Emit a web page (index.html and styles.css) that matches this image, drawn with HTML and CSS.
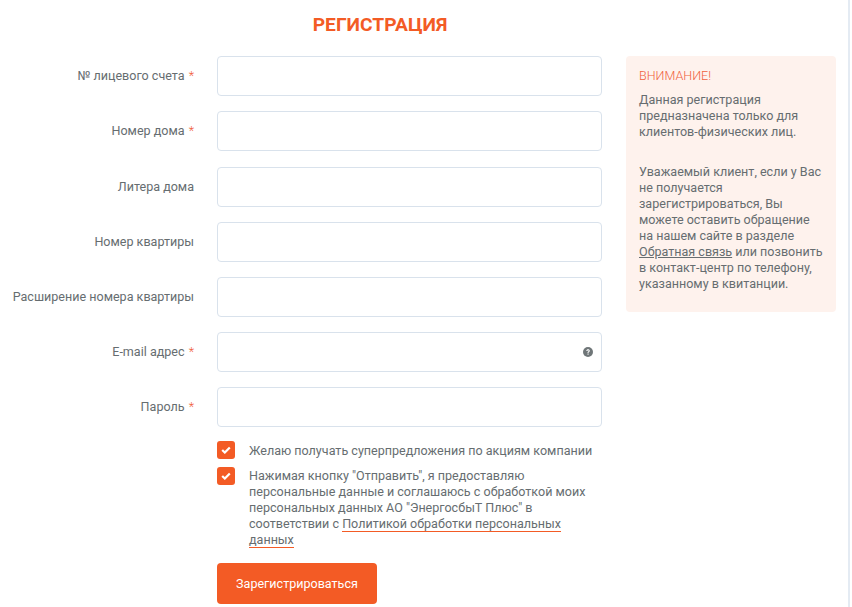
FILE: index.html
```html
<!DOCTYPE html>
<html lang="ru">
<head>
    <meta charset="UTF-8">
    <title>Регистрация</title>
    <link rel="stylesheet" href="styles.css">
</head>
<body>
    <div class="page">
        <h1 class="title">Регистрация</h1>
        <div class="content">
            <form class="form">
                <div class="row">
                    <label class="label">№ лицевого счета <span class="req">*</span></label>
                    <div class="field"><input class="input" type="text"></div>
                </div>
                <div class="row">
                    <label class="label">Номер дома <span class="req">*</span></label>
                    <div class="field"><input class="input" type="text"></div>
                </div>
                <div class="row">
                    <label class="label">Литера дома</label>
                    <div class="field"><input class="input" type="text"></div>
                </div>
                <div class="row">
                    <label class="label">Номер квартиры</label>
                    <div class="field"><input class="input" type="text"></div>
                </div>
                <div class="row">
                    <label class="label">Расширение номера квартиры</label>
                    <div class="field"><input class="input" type="text"></div>
                </div>
                <div class="row">
                    <label class="label">E-mail адрес <span class="req">*</span></label>
                    <div class="field">
                        <input class="input" type="text">
                        <svg class="help" viewBox="0 0 10 10" width="10" height="10">
                            <circle cx="5" cy="5" r="5" fill="#6f7678"/>
                            <path d="M3.3 3.9c0-1 .8-1.6 1.8-1.6s1.7.6 1.7 1.5c0 1.2-1.3 1.2-1.3 2.1H4.5c0-1.4 1.2-1.4 1.2-2.1 0-.3-.3-.5-.6-.5-.4 0-.7.3-.7.7z" fill="#fff"/>
                            <rect x="4.5" y="6.5" width="1.1" height="1.2" fill="#fff"/>
                        </svg>
                    </div>
                </div>
                <div class="row">
                    <label class="label">Пароль <span class="req">*</span></label>
                    <div class="field"><input class="input" type="text"></div>
                </div>
                <div class="checks">
                    <div class="check">
                        <span class="box">
                            <svg viewBox="0 0 10 8" width="10" height="8"><path d="M1.2 4l2.6 2.5L8.8 1.4" fill="none" stroke="#fff" stroke-width="2.2"/></svg>
                        </span>
                        <p class="check-text check-single">Желаю получать суперпредложения по акциям компании</p>
                    </div>
                    <div class="check">
                        <span class="box">
                            <svg viewBox="0 0 10 8" width="10" height="8"><path d="M1.2 4l2.6 2.5L8.8 1.4" fill="none" stroke="#fff" stroke-width="2.2"/></svg>
                        </span>
                        <p class="check-text">Нажимая кнопку "Отправить", я предоставляю персональные данные и соглашаюсь с обработкой моих персональных данных АО "ЭнергосбыТ Плюс" в соответствии с <a class="policy" href="#">Политикой обработки персональных данных</a></p>
                    </div>
                </div>
                <button class="submit" type="button">Зарегистрироваться</button>
            </form>
            <aside class="notice">
                <p class="notice-title">ВНИМАНИЕ!</p>
                <p class="notice-text">Данная регистрация предназначена только для клиентов-физических лиц.</p>
                <p class="notice-text">Уважаемый клиент, если у Вас не получается зарегистрироваться, Вы можете оставить обращение на нашем сайте в разделе <a class="link" href="#">Обратная связь</a> или позвонить в контакт-центр по телефону, указанному в квитанции.</p>
            </aside>
        </div>
    </div>
</body>
</html>
```
FILE: styles.css
```css
* {
    margin: 0;
    padding: 0;
    box-sizing: border-box;
}
html, body {
    height: 607px;
    overflow: hidden;
}
body {
    background: #fff;
    font-family: Roboto, "Liberation Sans", sans-serif;
    font-size: 12.55px;
    line-height: 16px;
    color: #666d70;
}
.page {
    width: 850px;
    height: 607px;
    border-right: 2px solid #e4ebf3;
    padding-right: 12px;
}
.title {
    width: 760px;
    padding-top: 13px;
    height: 56.2px;
    text-align: center;
    font-size: 19.2px;
    line-height: 24px;
    font-weight: 700;
    text-transform: uppercase;
    color: #f35b25;
}
.content {
    display: flex;
    gap: 24px;
    align-items: flex-start;
}
.form {
    width: 602px;
    flex-shrink: 0;
}
.row {
    display: flex;
    align-items: center;
    gap: 23px;
    margin-bottom: 15.2px;
}
.label {
    width: 194px;
    flex-shrink: 0;
    text-align: right;
    white-space: nowrap;
}
.req {
    margin-left: 1px;
    font-weight: 300;
    color: #f0603c;
}
.field {
    position: relative;
    flex: 1;
}
.input {
    display: block;
    width: 100%;
    height: 40px;
    border: 1px solid #d9e2ec;
    border-radius: 4px;
    background: #fff;
}
.help {
    position: absolute;
    right: 9px;
    top: 15px;
}
.checks {
    margin-left: 217px;
    margin-top: -1.6px;
}
.check {
    display: flex;
    gap: 14px;
    margin-bottom: 8px;
}
.box {
    width: 18px;
    height: 18px;
    flex-shrink: 0;
    display: flex;
    align-items: center;
    justify-content: center;
    background: #f35b25;
    border-radius: 3px;
}
.check-text {
    padding-top: 1px;
}
.check-single {
    padding-top: 2px;
}
.policy {
    color: inherit;
    text-decoration: none;
    border-bottom: 1px solid #f35b25;
}
.submit {
    display: block;
    width: 160px;
    height: 41px;
    margin: 15px 0 0 217px;
    border: 0;
    border-radius: 4px;
    background: #f35b25;
    color: #fff;
    font-family: inherit;
    font-size: 12.55px;
}
.notice {
    width: 210px;
    height: 256px;
    padding: 12px 13px;
    background: #fef2ed;
    border-radius: 4px;
}
.notice-title {
    font-weight: 300;
    color: #f0603c;
    margin-bottom: 8px;
}
.notice-text {
    margin-bottom: 24px;
}
.link {
    color: inherit;
}
```
